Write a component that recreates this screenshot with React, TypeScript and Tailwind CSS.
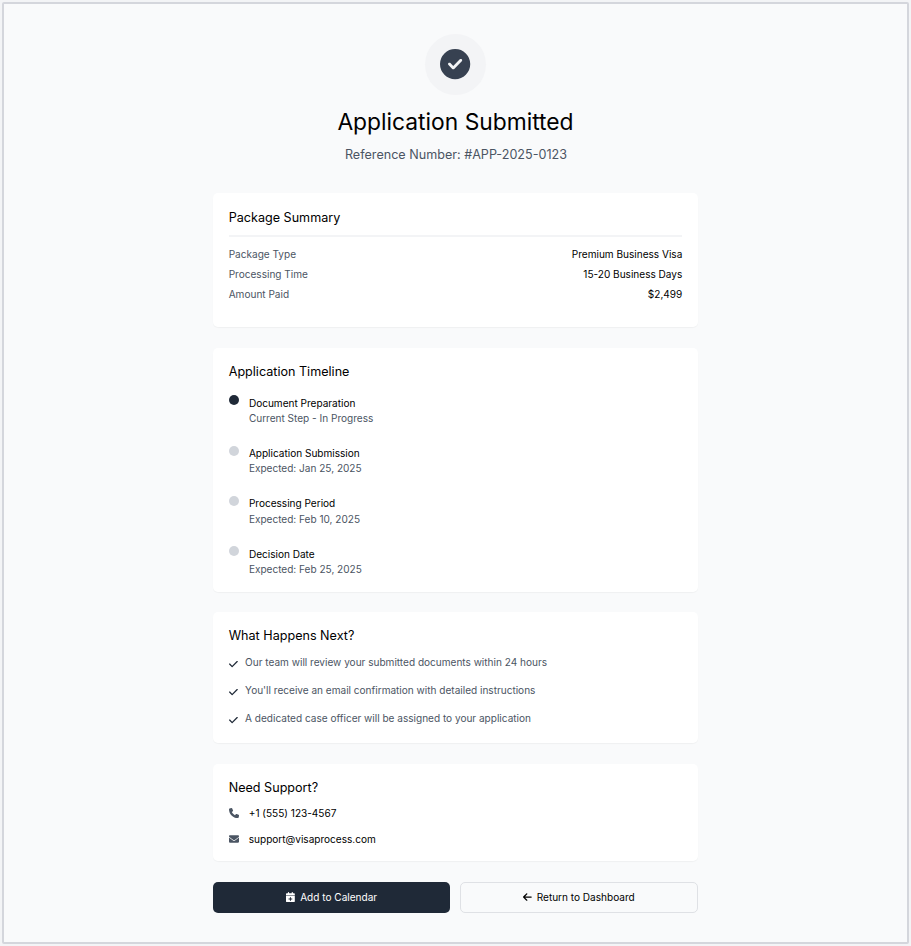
import type { ReactNode } from "react";
import { FaArrowLeft, FaCalendarPlus, FaCheck, FaCircleCheck, FaEnvelope, FaPhone } from "react-icons/fa6";

const summary = [
  ["Package Type", "Premium Business Visa"],
  ["Processing Time", "15-20 Business Days"],
  ["Amount Paid", "$2,499"],
];

const timeline = [
  { title: "Document Preparation", note: "Current Step - In Progress", active: true },
  { title: "Application Submission", note: "Expected: Jan 25, 2025", active: false },
  { title: "Processing Period", note: "Expected: Feb 10, 2025", active: false },
  { title: "Decision Date", note: "Expected: Feb 25, 2025", active: false },
];

const nextSteps = [
  "Our team will review your submitted documents within 24 hours",
  "You'll receive an email confirmation with detailed instructions",
  "A dedicated case officer will be assigned to your application",
];

function Card({ title, className, children }: { title: string; className: string; children: ReactNode }) {
  return (
    <section className={`rounded-[5px] bg-white px-[15.5px] shadow-[0_1px_1px_rgba(0,0,0,0.04)] ${className}`}>
      <h2 className="text-[12.6px] leading-[18px] text-black">{title}</h2>
      {children}
    </section>
  );
}

export default function App() {
  return (
    <div className="h-[946px] w-[911px] bg-[#f3f4f6] p-[2px] font-['Inter',sans-serif] text-[10.06px] leading-[15px] text-black">
      <main className="h-[942px] w-[907px] rounded-[2px] border-2 border-[#d4d6dc] bg-[#f9fafb]">
        <div className="ml-[209.2px] w-[484.6px]">
          <header className="flex h-[189px] flex-col items-center pt-[30px]">
            <div className="flex size-[61px] items-center justify-center rounded-full bg-[#f3f4f6]">
              <FaCircleCheck className="size-[30.24px] text-[#374151]" />
            </div>
            <h1 className="mt-[13px] text-[22.8px] leading-[28px]">Application Submitted</h1>
            <p className="mt-[10px] pl-px text-[12.6px] leading-[18px] text-[#4b5563]">Reference Number: #APP-2025-0123</p>
          </header>

          <Card title="Package Summary" className="h-[134px] pt-[16px]">
            <div className="mt-[8px] border-t-2 border-[#f3f4f6] pt-[7px]">
              {summary.map(([label, value]) => (
                <div key={label} className="flex h-5 items-center justify-between">
                  <span className="text-[#4b5563]">{label}</span>
                  <span>{value}</span>
                </div>
              ))}
            </div>
          </Card>

          <Card title="Application Timeline" className="mt-[21px] h-[244px] pt-[15px]">
            <div className="mt-[14px]">
              {timeline.map((step) => (
                <div key={step.title} className="flex h-[50.4px] items-start gap-[10.2px]">
                  <span className={`mt-[0.3px] size-[10px] shrink-0 rounded-full ${step.active ? "bg-[#1f2937]" : "bg-[#d1d5db]"}`} />
                  <div className="pt-[0.6px] leading-[15.12px]">
                    <p>{step.title}</p>
                    <p className="text-[#4b5563]">{step.note}</p>
                  </div>
                </div>
              ))}
            </div>
          </Card>

          <Card title="What Happens Next?" className="mt-5 h-[131px] pt-[15px]">
            <ul className="mt-[10px] flex flex-col gap-[13px]">
              {nextSteps.map((step) => (
                <li key={step} className="flex items-start gap-[7.6px] text-[#4b5563]">
                  <FaCheck className="mt-[4px] h-[10.08px] w-[8.82px] shrink-0 text-[#1f2937]" />
                  <span>{step}</span>
                </li>
              ))}
            </ul>
          </Card>

          <Card title="Need Support?" className="mt-[21px] h-[97px] pt-[15px]">
            <div className="mt-[9px] flex flex-col gap-[11px]">
              <div className="flex items-center gap-[10px]">
                <FaPhone className="size-[10.08px] text-[#4b5563]" />
                <span>+1 (555) 123-4567</span>
              </div>
              <div className="flex items-center gap-[10px]">
                <FaEnvelope className="mb-px size-[10.08px] text-[#4b5563]" />
                <span>support@visaprocess.com</span>
              </div>
            </div>
          </Card>

          <div className="mt-[21px] flex h-[31px] gap-[10px]">
            <button className="flex w-[236.6px] items-center justify-center gap-[5.5px] rounded-[5px] bg-[#1f2937] text-white">
              <FaCalendarPlus className="h-[10.08px] w-[8.82px]" />
              Add to Calendar
            </button>
            <button className="flex flex-1 items-center justify-center gap-[5px] rounded-[5px] border border-[#dfe1e5]">
              <FaArrowLeft className="h-[10.08px] w-[8.82px]" />
              Return to Dashboard
            </button>
          </div>
        </div>
      </main>
    </div>
  );
}
